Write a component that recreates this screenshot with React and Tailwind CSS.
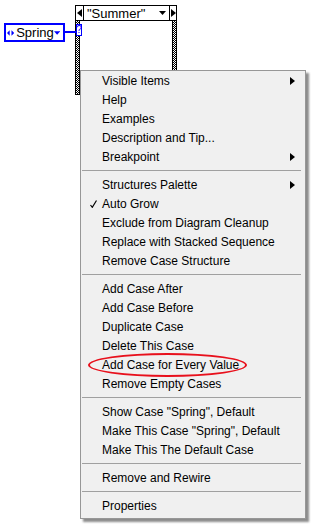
const menu = [
  ["Visible Items", { sub: true }],
  ["Help"],
  ["Examples"],
  ["Description and Tip..."],
  ["Breakpoint", { sub: true }],
  "sep",
  ["Structures Palette", { sub: true }],
  ["Auto Grow", { checked: true }],
  ["Exclude from Diagram Cleanup"],
  ["Replace with Stacked Sequence"],
  ["Remove Case Structure"],
  "sep",
  ["Add Case After"],
  ["Add Case Before"],
  ["Duplicate Case"],
  ["Delete This Case"],
  ["Add Case for Every Value"],
  ["Remove Empty Cases"],
  "sep",
  ['Show Case "Spring", Default'],
  ['Make This Case "Spring", Default'],
  ["Make This The Default Case"],
  "sep",
  ["Remove and Rewire"],
  "sep",
  ["Properties"],
];

const checker =
  "bg-[repeating-conic-gradient(#000_0%_25%,#fff_0%_50%)] [background-size:2px_2px]";

const Arrow = ({ dir }) => (
  <svg width="5" height="8" viewBox="0 0 5 8" className="block">
    {dir === "right" ? <path d="M0 0 L5 4 L0 8 Z" fill="#000" /> : <path d="M5 0 L0 4 L5 8 Z" fill="#000" />}
  </svg>
);

const Down = ({ color = "#000" }) => (
  <svg width="7" height="4" viewBox="0 0 7 4" className="block">
    <path d="M0 0 H7 L3.5 4 Z" fill={color} />
  </svg>
);

const CaseStructure = () => (
  <div className="absolute left-[75px] top-[5px] w-[102px]">
    <div className="flex h-[16px] items-stretch border border-black bg-white">
      <div className="flex w-[8px] items-center justify-center border-r border-black">
        <Arrow dir="left" />
      </div>
      <div className="flex flex-1 items-center justify-between pl-[3px] pr-[3px] text-[13px] leading-none text-black">
        <span>"Summer"</span>
        <Down />
      </div>
      <div className="flex w-[7px] items-center justify-center border-l border-black">
        <Arrow dir="right" />
      </div>
    </div>
    <div className="flex justify-between">
      <div className={`h-[74px] w-[5px] border-x border-b border-black ${checker}`} />
      <div className={`h-[74px] w-[5px] border-x border-b border-black ${checker}`} />
    </div>
  </div>
);

const EnumControl = () => (
  <>
    <div className="absolute left-[4px] top-[23px] flex h-[19px] w-[61px] items-center border-2 border-[#0000ff] bg-white pl-[1px] pr-[3px] text-[13px] leading-none text-black">
      <svg width="8" height="6" viewBox="0 0 8 6" className="mr-[2px] block">
        <path d="M0 3 L3 0 V6 Z M8 3 L5 0 V6 Z" fill="#0000ff" />
      </svg>
      <span className="flex-1">Spring</span>
      <Down color="#0000ff" />
    </div>
    <div className="absolute left-[65px] top-[31px] h-[2px] w-[11px] bg-[#0000ff]" />
    <div className="absolute left-[76px] top-[24px] flex h-[12px] w-[6px] items-center justify-center border border-[#0000ff] bg-white text-[10px] leading-none text-[#0000ff]">
      ?
    </div>
  </>
);

const ContextMenu = () => (
  <div className="absolute left-[80px] top-[70px] w-[226px] border border-[#979797] bg-[#f0f0f0] pb-[3px] shadow-[3px_3px_2px_rgba(0,0,0,0.45)]">
    {menu.map((item, i) =>
      item === "sep" ? (
        <div key={i} className="flex h-[9px] items-center pl-[1px] pr-[4px]">
          <div className="h-px w-full bg-[#a0a0a0]" />
        </div>
      ) : (
        <div key={i} className="relative flex h-[19px] items-center pl-[21px] text-[12px] text-black">
          {item[1]?.checked && (
            <svg width="7" height="8" viewBox="0 0 7 8" className="absolute left-[9px] top-[6px]">
              <path d="M0.5 5 L2.3 7.3 L6.5 0.5" stroke="#000" strokeWidth="1.2" fill="none" />
            </svg>
          )}
          <span>{item[0]}</span>
          {item[1]?.sub && (
            <span className="absolute left-[209px] top-[6px]">
              <Arrow dir="right" />
            </span>
          )}
        </div>
      )
    )}
  </div>
);

export default function App() {
  return (
    <div className="relative h-[525px] w-[313px] overflow-hidden bg-white font-['Liberation_Sans',Arial,sans-serif]">
      <CaseStructure />
      <EnumControl />
      <ContextMenu />
      <div className="absolute left-[88px] top-[353px] h-[24px] w-[159px] rounded-[50%] border-2 border-[#e8101c]" />
    </div>
  );
}
